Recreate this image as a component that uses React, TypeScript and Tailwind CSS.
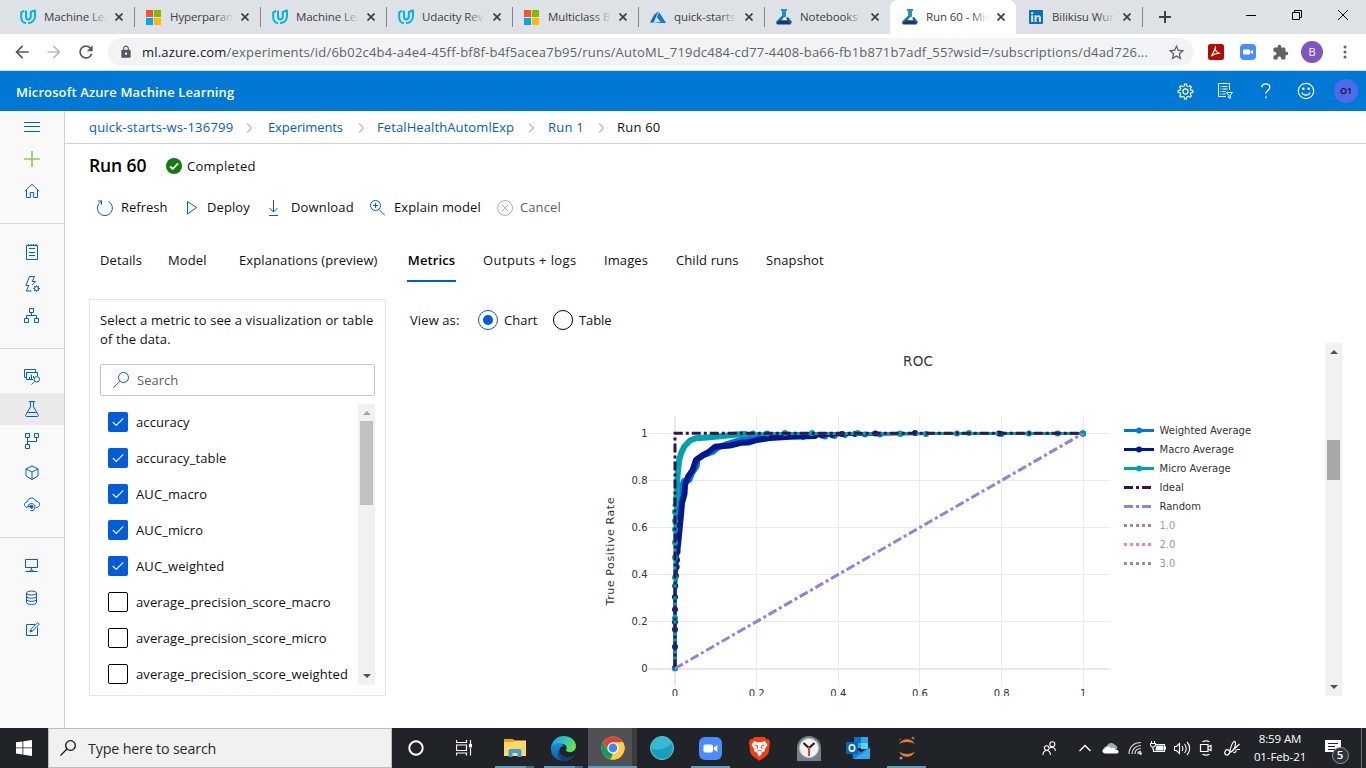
import React from "react";
import { MdExtension, MdStarBorder, MdLock, MdArrowBack, MdArrowForward, MdRefresh } from "react-icons/md";
import { FaLinkedin } from "react-icons/fa";

type IconProps = { children: React.ReactNode; size?: number; color?: string; sw?: number; box?: string };

function Line({ children, size = 16, color = "#015cda", sw = 1, box }: IconProps) {
  return (
    <svg width={size} height={size} viewBox={box ?? `0 0 ${size} ${size}`} fill="none" stroke={color} strokeWidth={sw} className="shrink-0">
      {children}
    </svg>
  );
}

/* ---------- browser chrome ---------- */

const Udacity = () => (
  <svg width="17" height="16" viewBox="0 0 17 16" fill="none" stroke="#02b3e4" strokeWidth="2" strokeLinejoin="round">
    <path d="M4.300 1.800 1.200 3.300V8c0 3.400 2 6 4.800 6.200" />
    <path d="M6 1.800v5.400c0 2 .8 3.200 2.300 3.200s2.500-1.200 2.500-3.100V3l4.200-1.500v5.700c0 3.900-2.800 6.900-7 6.900" />
  </svg>
);
const MsLogo = ({ s = 15 }: { s?: number }) => (
  <svg width={s} height={s} viewBox="0 0 15 15">
    <rect width="7" height="7" fill="#f8512c" />
    <rect x="8" width="7" height="7" fill="#80b900" />
    <rect y="8" width="7" height="7" fill="#01a5f0" />
    <rect x="8" y="8" width="7" height="7" fill="#ffb902" />
  </svg>
);
const Azure = () => (
  <svg width="16" height="16" viewBox="0 0 16 16">
    <path d="M8.500 2 4 6 0 13.500h3.700z" fill="#0f6cbd" />
    <path d="M9 3 6.800 8.500l4 4.300L3.500 14H16z" fill="#0a7ad6" />
  </svg>
);
const MlFlask = () => (
  <svg width="16" height="16" viewBox="0 0 16 16">
    <path d="M5 0h6v2h-1v5l-4 3-5 5.500L0 13l6-6V2H5z" fill="#1b93c9" />
    <path d="M6 7h4l-5 5-4 3.500L0 13z" fill="#0f79b6" />
    <path d="M1 13.500 5 11h8l2.500 2-1 2.500h-13z" fill="#173a6c" />
    <path d="M5.500 11.200 8 8l3.500 3.200z" fill="#fff" />
    <path d="m10 9 2-1 4 5-2 2z" fill="#1a5c9c" />
  </svg>
);

const browserTabs = [
  { icon: <Udacity />, title: "Machine Lea" },
  { icon: <MsLogo />, title: "Hyperparam" },
  { icon: <Udacity />, title: "Machine Lea" },
  { icon: <Udacity />, title: "Udacity Rev" },
  { icon: <MsLogo />, title: "Multiclass B" },
  { icon: <Azure />, title: "quick-starts-" },
  { icon: <MlFlask />, title: "Notebooks -" },
  { icon: <MlFlask />, title: "Run 60 - Mic" },
  { icon: <FaLinkedin size={16} color="#0a72b1" />, title: "Bilikisu Wura" },
];

function TabStrip() {
  return (
    <div className="flex h-[34px] bg-[#dee1e6] pl-2">
      {browserTabs.map((t, i) => {
        const active = i === 7;
        const sep = !active && i !== 6;
        return (
          <div key={i} className={active ? "relative flex h-full w-[126px] items-center rounded-t-lg bg-white" : "relative flex h-full w-[126px] items-center"}>
            <span className="ml-3 flex w-6 shrink-0">{t.icon}</span>
            <span className="relative w-[63px] overflow-hidden whitespace-nowrap text-[11.5px] tracking-[-0.1px] text-[#3c4043]">
              {t.title}
              <i className={(active ? "from-white " : "from-[#dee1e6] ") + "absolute inset-y-0 right-0 w-[18px] bg-gradient-to-l to-transparent"} />
            </span>
            <span className="ml-2 flex">
              <Line size={8} color="#3c4043" sw={1.7}><path d="m.5.5 7 7m0-7-7 7" /></Line>
            </span>
            {sep && <span className="absolute right-[-1px] top-[7px] h-5 w-px bg-[#80868b]" />}
          </div>
        );
      })}
      <div className="flex items-center pl-[17px]">
        <Line size={12} color="#3c4043" sw={2}><path d="M6 0v12M0 6h12" /></Line>
      </div>
      <div className="ml-auto flex h-[29px] items-center">
        <span className="flex w-[46px] justify-center"><Line size={10} color="#000"><path d="M0 5.500h10" /></Line></span>
        <span className="flex w-[46px] justify-center"><Line size={10} color="#000"><path d="M.5 2.500h7v7h-7zM2.500 2.500v-2h7v7h-2" /></Line></span>
        <span className="flex w-[46px] justify-center"><Line size={10} color="#000"><path d="m0 0 10 10M10 0 0 10" /></Line></span>
      </div>
    </div>
  );
}

function AddressBar() {
  return (
    <div className="flex h-[37px] items-center border-b border-[#d5d8dc] bg-white">
      <span className="ml-3 flex w-8"><MdArrowBack size={20} color="#55585d" /></span>
      <span className="flex w-8"><MdArrowForward size={20} color="#bcbec1" /></span>
      <span className="flex w-8"><MdRefresh size={20} color="#55585d" /></span>
      <div className="flex h-7 w-[1086px] items-center rounded-full bg-[#f1f3f4] pl-[11px] pr-2">
        <MdLock size={14} color="#55585d" />
        <span className="ml-[9px] whitespace-nowrap pt-px text-[13px] tracking-[0.203px] text-[#5f6368]">
          <span className="text-[#202124]">ml.azure.com</span>/experiments/id/6b02c4b4-a4e4-45ff-bf8f-b4f5acea7b95/runs/AutoML_719dc484-cd77-4408-ba66-fb1b871b7adf_55?wsid=/subscriptions/d4ad726...
        </span>
        <span className="ml-auto"><MdStarBorder size={19} color="#5f6368" /></span>
      </div>
      <div className="ml-3.5 flex items-center">
        <svg width="16" height="16" viewBox="0 0 16 16"><rect width="16" height="16" rx="2.500" fill="#b30b00" /><path d="M3.500 12c1-2 4-7 3.800-8.500-.8 2 1.500 5.500 5 6-3.300-.3-6.300.3-8.800 2.500z" fill="none" stroke="#fff" strokeWidth="1.200" /></svg>
        <svg className="ml-4" width="16" height="16" viewBox="0 0 16 16"><rect width="16" height="16" rx="4" fill="#4a8cff" /><rect x="3" y="5.500" width="7" height="5" rx="1" fill="#fff" /><path d="M10.500 7.500 13 5.700v4.600l-2.500-1.800z" fill="#fff" /></svg>
        <span className="ml-4"><MdExtension size={17} color="#5f6368" /></span>
        <span className="ml-[12px] flex size-[22px] items-center justify-center rounded-full bg-[#7e57c2] text-[11px] text-white">B</span>
        <svg className="ml-5" width="4" height="14" viewBox="0 0 4 14" fill="#5f6368"><circle cx="2" cy="2" r="1.500" /><circle cx="2" cy="7" r="1.500" /><circle cx="2" cy="12" r="1.500" /></svg>
      </div>
    </div>
  );
}

/* ---------- azure shell ---------- */

const gearPath =
  "M7.100.6h1.800l.4 1.900 1.300.5 1.600-1 1.300 1.300-1 1.600.5 1.300 1.900.4v1.800l-1.900.4-.5 1.300 1 1.600-1.300 1.300-1.600-1-1.300.5-.4 1.900H7.100l-.4-1.900-1.300-.5-1.600 1-1.300-1.300 1-1.600L3 8.800l-1.900-.4V6.600L3 6.200l.5-1.300-1-1.600L3.800 2l1.600 1 1.300-.5z";

function AzureHeader() {
  return (
    <header className="flex h-10 items-center bg-[#0078d4] pl-4 text-white">
      <span className="pt-[3px] text-[13px] font-semibold tracking-[0.11px]">Microsoft Azure Machine Learning</span>
      <div className="ml-auto flex items-center pr-2">
        <span className="flex w-10 justify-center"><Line size={17} box="0 -0.500 16 16" color="#fff" sw={1.1}><path d={gearPath} /><circle cx="8" cy="7.500" r="2.400" /></Line></span>
        <span className="flex w-10 justify-center">
          <Line color="#fff"><path d="M9 13.500H1.500V.5h11V7M3.500 3.500h1M5.500 3.500h5M3.500 6h1M5.500 6h5M3.500 8.500h1M5.500 8.500h3M3.500 11h1M5.500 11h3M9.500 9.500h6l-2.300 2.800v3.200l-1.500-1v-2.200z" /></Line>
        </span>
        <span className="flex w-[41px] justify-center"><Line color="#fff" sw={1.3}><path d="M3.800 4.300C3.800 2 5.500.8 7.800.8c2.400 0 4 1.300 4 3.400 0 3.300-3.900 3.300-3.900 6.600M7.900 13.300v1.900" /></Line></span>
        <span className="flex w-10 justify-center">
          <Line size={18} color="#fff" sw={1.200}><circle cx="9" cy="9" r="7.700" /><path d="M4.800 10.500c1.600 3.600 6.800 3.600 8.400 0" /><circle cx="6.300" cy="6.700" r=".7" fill="#fff" /><circle cx="11.700" cy="6.700" r=".7" fill="#fff" /></Line>
        </span>
        <span className="ml-[8px] flex size-6 items-center justify-center rounded-full bg-[#4f6bed] text-[9px] font-semibold text-[#111]">O1</span>
      </div>
    </header>
  );
}

const navGroups: React.ReactNode[][] = [
  [
    <Line><path d="M0 3.500h16M0 7.500h16M0 12.500h16" /></Line>,
    <Line color="#86cf4c" sw={1.600}><path d="M0 8h16M8 0v16" /></Line>,
    <Line><path d="m.8 8.300 7.200-7 7.200 7M2.500 7v7.500h3.800v-5h3.400v5h3.800V7" /></Line>,
  ],
  [
    <Line><path d="M2.500 1.500h11v14h-11zM5 4.500h6M5 8.500h6M5 11.500h6" /><path d="M4.500 0v2M7 0v2M9.500 0v2M12 0v2" /></Line>,
    <Line><path d="m7.500 15-5.200 0 2.500-5.500H2L5.500.5h5L8.200 5.500h3.500L8 9" /><circle cx="12.500" cy="12.500" r="2" /><path d="M12.500 9.300v1.200M12.500 14.500v1.300M9.200 12.500h1.300M14.500 12.500H16M10.200 10.200l.9.900M14 14l.9.900M14.800 10.200l-.9.900M11 14l-.9.900" /></Line>,
    <Line><path d="M5.500.5h4v4h-4zM.5 10.500h4v4h-4zM10.500 10.500h4v4h-4zM7.500 4.500v3M2.500 10.500v-3h10v3" /></Line>,
  ],
  [
    <Line><path d="M9 10.500H2.500v-7h11V7M2.500 8.500h-2v-8h11v3M5.500 10V8M7.500 10V5.500M9.500 9V7" /><circle cx="12.800" cy="10.300" r="2.700" /><path d="M10.900 12.300 7.500 15.700" /></Line>,
    <Line><path d="M5 .5h6M6.500.5v5.200L1.800 14c-.4.900 0 1.500.8 1.500h10.800c.8 0 1.200-.6.800-1.500L9.500 5.700V.5M3.300 11.500h9.400" /></Line>,
    <Line><path d="M1.500.5h4v4h-4zM10.500.5h4v4h-4zM1.500 11.500h4v4h-4zM3.500 4.500v7M3.500 8.500h9v-4" /></Line>,
    <Line><path d="M8 1 14 4v7l-6 3.500L2 11V4zM2 4l6 3 6-3M8 7v7.500" /></Line>,
    <Line><path d="M3.500 10.500C1.500 10.500.5 9 .5 7.700c0-1.500 1.100-2.700 2.700-2.700C3.500 2.500 5.300 1 7.500 1c2 0 3.500 1.200 4 3 2.300 0 4 1.200 4 3.200 0 1.900-1.300 3.300-3.500 3.300" /><path d="M4 9.500a3.500 3.500 0 1 1 2.500 4" /><circle cx="7.500" cy="9.800" r="1.500" fill="#015cda" /><path d="M3.500 9.500h4" /></Line>,
  ],
  [
    <Line><path d="M1.500 1.500h12v8h-12zM7.500 9.500v3M1.500 13.500h12M5 13.500l2.500-2 2.500 2" /></Line>,
    <Line><ellipse cx="7.500" cy="3" rx="5" ry="2" /><path d="M2.500 3v9.500c0 2.700 10 2.700 10 0V3M2.500 6.200c0 2.700 10 2.700 10 0M2.500 9.300c0 2.700 10 2.700 10 0" /></Line>,
    <Line><path d="M11 2.500H2.500v11h11V5.500M6 10l.7-2.500 7-6.800 1.500 1.500-6.800 7zM6.700 7.700l1.600 1.500" /></Line>,
  ],
];

function SideNav() {
  return (
    <nav className="flex w-[65px] shrink-0 flex-col border-r border-[#d2d0ce] bg-[#f9f9f9]">
      {navGroups.map((g, gi) => (
        <div key={gi} className={gi === 0 ? "pb-4" : "border-t border-[#d8d6d4] pb-4 pt-3"}>
          {g.map((ic, i) => (
            <div key={i} className={gi === 2 && i === 1 ? "flex h-8 items-center justify-center bg-[#eaeaea]" : "flex h-8 items-center justify-center"}>
              {ic}
            </div>
          ))}
        </div>
      ))}
    </nav>
  );
}

const Chevron = () => (
  <Line size={10} color="#8a8886"><path d="m2 .5 4.500 4.500L2 9.500" /></Line>
);

function Breadcrumb() {
  return (
    <div className="flex h-[33px] items-center whitespace-nowrap border-b border-[#d2d0ce] pl-6 pt-px text-[13px] tracking-[0.06px] text-[#015cda]">
      <span className="w-[158px] tracking-[0.2px]">quick-starts-ws-136799</span>
      <span className="-ml-[2px] flex w-[23px]"><Chevron /></span>
      <span className="w-[89px] tracking-[-0.1px]">Experiments</span>
      <span className="flex w-5"><Chevron /></span>
      <span className="w-[150px] tracking-[0.1px]">FetalHealthAutomlExp</span>
      <span className="flex w-[21px]"><Chevron /></span>
      <span className="w-[49px] tracking-[0.2px]">Run 1</span>
      <span className="flex w-5"><Chevron /></span>
      <span className="tracking-[0.2px] text-[#111]">Run 60</span>
    </div>
  );
}

function Toolbar() {
  return (
    <div className="mt-[18px] flex h-6 items-center whitespace-nowrap text-[13px] tracking-[0.05px] text-[#111]">
      <span className="ml-2 flex w-6"><Line><path d="M4 1.500A7.500 7.500 0 1 0 11.500 1.300M4.500.5v4M.8.8h4" transform="translate(0 .2)" /></Line></span>
      <span className="w-[66px] tracking-[0]">Refresh</span>
      <span className="flex w-5"><Line><path d="m.5 1.500 9 6-9 6.500z" /></Line></span>
      <span className="w-[58px] tracking-[0.1px]">Deploy</span>
      <span className="flex w-[26px]"><Line><path d="M8.500 0v12M4.500 8l4 4 4-4M4 15.500h9" /></Line></span>
      <span className="w-[78px] tracking-[0.15px]">Download</span>
      <span className="flex w-[25px]"><Line><circle cx="6.500" cy="5.500" r="5" /><path d="m10 9.500 6 6M4 5.500h5M6.500 3v5" /></Line></span>
      <span className="w-[103px] tracking-[0.1px]">Explain model</span>
      <span className="flex w-[23px]"><Line color="#b3b1af"><circle cx="8" cy="8" r="7.500" /><path d="m5 5 6 6m0-6-6 6" /></Line></span>
      <span className="tracking-[0.1px] text-[#605e5c]">Cancel</span>
    </div>
  );
}

function PageTabs() {
  return (
    <div className="mt-[18px] flex h-[44px] items-center whitespace-nowrap pl-[11px] text-[13px] tracking-[0.1px] text-[#111]">
      <span className="w-[68px] pt-0.5">Details</span>
      <span className="w-[71px] pt-0.5">Model</span>
      <span className="w-[168px] pt-0.5">Explanations (preview)</span>
      <span className="mr-[27px] flex h-full w-[49px] items-center justify-center border-b-2 border-[#015cda] pt-1 font-semibold text-black">Metrics</span>
      <span className="w-[121px] pt-0.5 tracking-[0.4px]">Outputs + logs</span>
      <span className="w-[72px] pt-0.5">Images</span>
      <span className="w-[90px] pt-0.5">Child runs</span>
      <span className="pt-0.5">Snapshot</span>
    </div>
  );
}

const metrics = [
  ["accuracy", true],
  ["accuracy_table", true],
  ["AUC_macro", true],
  ["AUC_micro", true],
  ["AUC_weighted", true],
  ["average_precision_score_macro", false],
  ["average_precision_score_micro", false],
  ["average_precision_score_weighted", false],
] as const;

const Up = ({ c }: { c: string }) => <svg width="8" height="4" viewBox="0 0 8 4" fill={c}><path d="M0 4 4 0l4 4z" /></svg>;
const Down = ({ c }: { c: string }) => <svg width="8" height="4" viewBox="0 0 8 4" fill={c}><path d="M0 0h8L4 4z" /></svg>;

function MetricPanel() {
  return (
    <section className="h-[397px] w-[297px] shrink-0 border border-[#e6e5e4] px-2.5 pt-[11px] text-[13px] text-[#111]">
      <p className="whitespace-nowrap leading-[19px] tracking-[0.12px]">Select a metric to see a visualization or table<br />of the data.</p>
      <div className="mt-[15px] flex h-8 items-center rounded-xs border border-[#c8c6c4] pl-3 text-[#605e5c]">
        <Line><circle cx="10.500" cy="5.500" r="5" /><path d="M7 9.200.5 15.700" /></Line>
        <span className="ml-2 pt-px">Search</span>
      </div>
      <div className="mt-2 flex h-[281px]">
        <ul className="w-[258px] pl-2 pt-2">
          {metrics.map(([name, on]) => (
            <li key={name} className="mb-4 flex h-5 items-center">
              {on ? (
                <span className="flex size-5 shrink-0 items-center justify-center rounded-xs bg-[#015cda]">
                  <Line size={12} color="#fff" sw={1.100}><path d="m.8 6 3.500 3.500L11.300 2.300" /></Line>
                </span>
              ) : (
                <span className="size-5 shrink-0 rounded-xs border border-black bg-white" />
              )}
              <span className="ml-2 whitespace-nowrap pt-px tracking-[0.1px]">{name}</span>
            </li>
          ))}
        </ul>
        <div className="flex w-[17px] shrink-0 flex-col items-center bg-[#f1f1f1] pb-[7px] pt-[7px]">
          <Up c="#a3a3a3" />
          <div className="mt-[6px] h-[84px] w-[13px] bg-[#c1c1c1]" />
          <div className="mt-auto"><Down c="#505050" /></div>
        </div>
      </div>
    </section>
  );
}

/* ---------- ROC chart ---------- */

const ticks = [0, 0.2, 0.4, 0.6, 0.8, 1];
const px = (v: number) => 675 + v * 408.3;
const py = (v: number) => 668.5 - v * 235;

const weightedCurve = "M677.500 548 679 520 679.500 500 681 490 684 481 689.300 480 692 473 696.700 466 697.500 459 704 455 713 451.600 718.300 447.300 727 444 736.700 441 750 438 763 436.700 790 436";
const macroCurve = "M677.500 552V538M678 545 679.500 530 681 515 682 503 684.500 494 685 485 688 476.700 692.700 470 696 460 703 455 708 452.500 715 446.700 730 445.500 741 442.800 748 442.600 756.700 440 770 438 790 436.700 815 436";
const microCurve = "M676 500 676.700 494 677.600 475 679 461 681 453.500 684.300 446.500 690 440.500 696 438.300 707 437.500 723 436 737 434.600 745 434";

const dots = (pts: number[][], fill: string) => pts.map(([x, y], i) => <circle key={i} cx={x} cy={y} r="3" fill={fill} />);

const weightedDots = [[675, 668], [803, 437], [825, 436.500], [834.500, 436], [845, 435], [865, 434.500], [880, 434.500], [900.500, 434], [926, 434], [957, 433.500], [1001.500, 434], [1029, 433.500], [1057.500, 433.500], [1083, 433.500]];
const macroDots = [[675, 668], [675, 646.700], [675, 629.500], [675, 622], [675, 609.500], [675, 597], [675.200, 586], [676, 576], [676.700, 567], [677, 560], [822, 435.500], [832, 435], [842, 434], [855, 434], [875.500, 433.500], [915, 433], [999, 433.500], [1083, 433.500]];
const microDots = [[675, 668.500], [675, 618], [675, 577.500], [675, 557.500], [675, 542.500], [675, 529.500], [675, 521], [675, 512], [675.500, 505], [753, 433.500], [767, 433.500], [785, 433], [812, 433], [857.500, 433], [900, 433.500], [969, 433], [1083, 433.500]];

const legend = [
  { name: "Weighted Average", color: "#0078d4", dash: "", dot: true, faded: false },
  { name: "Macro Average", color: "#00188f", dash: "", dot: true, faded: false },
  { name: "Micro Average", color: "#00a2ad", dash: "", dot: true, faded: false },
  { name: "Ideal", color: "#32174d", dash: "9 3 3 3", dot: false, faded: false },
  { name: "Random", color: "#9180de", dash: "9 3 3 3", dot: false, faded: false },
  { name: "1.0", color: "#a883a6", dash: "3 3", dot: false, faded: true },
  { name: "2.0", color: "#f27fc8", dash: "3 3", dot: false, faded: true },
  { name: "3.0", color: "#7f9a94", dash: "3 3", dot: false, faded: true },
];

function RocChart() {
  return (
    <svg width="915" height="353" viewBox="410 343 915 353" fontFamily="'DejaVu Sans', Verdana, sans-serif" fill="#2a3f5f">
      <text x="903" y="366" fontSize="13.500" fill="#333" letterSpacing="0.3">ROC</text>
      <g stroke="#ebebeb" strokeWidth="1">
        {ticks.slice(1).map((t) => <path key={t} d={`M${Math.floor(px(t)) + 0.5} 416V686M648 ${Math.floor(py(t)) + 0.5}H1110`} />)}
      </g>
      <path d="M675 416V686M648 669H1110" stroke="#e9e9e9" strokeWidth="2" />
      <g fontSize="10" fill="#333">
        {ticks.map((t) => <text key={t} x="647.500" y={py(t) + 3.5} textAnchor="end">{t}</text>)}
        {ticks.map((t) => <text key={t} x={px(t)} y="697" textAnchor="middle">{t}</text>)}
      </g>
      <text transform="translate(614 605.500) rotate(-90)" fontSize="11" fill="#333" textLength="108">True Positive Rate</text>
      <g fill="none" strokeLinejoin="round" strokeLinecap="round">
        <path d="M675 668V600L678 548M790 436 850 434.500 930 433.500H1083" stroke="#0078d4" strokeWidth="3" />
        <path d={weightedCurve} stroke="#0078d4" strokeWidth="6" />
        {dots(weightedDots, "#0078d4")}
        <path d="M675 668V590L677.500 550M815 436 850 434 930 433.500H1083" stroke="#00188f" strokeWidth="3" />
        <path d={macroCurve} stroke="#00188f" strokeWidth="6" />
        {dots(macroDots, "#00188f")}
        <path d="M675 668V515L676 500M740 434 780 433.500H1083" stroke="#00a2ad" strokeWidth="3" />
        <path d={microCurve} stroke="#00a2ad" strokeWidth="6" />
        {dots(microDots, "#00a2ad")}
      </g>
      <path d="M675 668.500V433.300H1083" fill="none" stroke="#32174d" strokeWidth="3" strokeDasharray="9 3 3 3" />
      <path d="M675 668.500 1083 433.500" fill="none" stroke="#9180de" strokeWidth="3" strokeDasharray="9 3 3 3" />
      {legend.map((l, i) => {
        const y = 430.5 + i * 19;
        return (
          <g key={l.name}>
            <path d={`M1124 ${y}h30`} stroke={l.color} strokeWidth="3" strokeDasharray={l.dash} />
            {l.dot && <circle cx="1139" cy={y} r="3" fill={l.color} />}
            <text x="1159.500" y={y + 3.7} fontSize="10" fill={l.faded ? "#999" : "#333"}>{l.name}</text>
          </g>
        );
      })}
    </svg>
  );
}

function ChartArea() {
  return (
    <section className="ml-6 text-[13px] text-[#111]">
      <div className="flex h-11 items-center pb-0.5">
        <span className="w-[68px] pt-px tracking-[0.1px]">View as:</span>
        <span className="flex size-5 items-center justify-center rounded-full border border-[#015cda]"><i className="size-2.5 rounded-full bg-[#015cda]" /></span>
        <span className="ml-1.5 w-[49px] pt-px">Chart</span>
        <span className="size-5 rounded-full border border-black" />
        <span className="ml-1.5 pt-px tracking-[-0.1px]">Table</span>
      </div>
      <div className="flex h-[353px]">
        <RocChart />
        <div className="flex w-[17px] flex-col items-center bg-[#f1f1f1] py-[7px]">
          <Up c="#505050" />
          <div className="mt-[86px] h-10 w-[13px] bg-[#a8a8a8]" />
          <div className="mt-auto"><Down c="#505050" /></div>
        </div>
      </div>
    </section>
  );
}

/* ---------- taskbar ---------- */

const Folder = () => (
  <svg width="22" height="20" viewBox="0 0 22 20"><path d="M0 1h9l2 2h11v15H0z" fill="#e8a60c" /><path d="M0 4h9l1.500-1.500H22V18H0z" fill="#ffd868" /><path d="M4.500 19v-6a2 2 0 0 1 2-2h9a2 2 0 0 1 2 2v6h-4v-4h-5v4z" fill="#3d9bdc" /></svg>
);
const Edge = () => (
  <svg width="25" height="25" viewBox="0 0 24 24">
    <defs>
      <linearGradient id="edgeTop" x1="0" x2="1" y2=".4"><stop stopColor="#1b9de2" /><stop offset=".6" stopColor="#31c8c0" /><stop offset="1" stopColor="#67e04f" /></linearGradient>
      <linearGradient id="edgeLow" x2="0" y2="1"><stop stopColor="#1a92dc" /><stop offset="1" stopColor="#0d57a6" /></linearGradient>
    </defs>
    <path d="M0 11C1 4.500 6 0 12 0c7 0 12 4.500 12 9.500 0 4-3 6-6 6-2.800 0-4.300-1-3.500-2.200 1.300-2 .3-5.800-4.500-5.800C5 7.500 1 9 0 13z" fill="url(#edgeTop)" />
    <path d="M0 12c.5-3.500 4-5.500 8-5 2 .2 4 1.500 4.500 3-2-.8-4.500 1-4.500 4 0 4.500 5 8 10.500 6.500 1.800-.5 3-1.600 3.800-1.800C20 22 16.500 24 12 24 5.500 24-.5 19 0 12z" fill="url(#edgeLow)" />
    <path d="M8 13c-1 5.500 5 9.500 10.500 7.500 1.800-.5 3-1.600 3.800-1.800-2.300 3.800-6.500 5.300-10.300 5.300-4.500-1.500-7-6.500-4-11z" fill="#123f7c" />
  </svg>
);
const Chrome = () => (
  <svg width="24" height="24" viewBox="0 0 24 24">
    <circle cx="12" cy="12" r="11.500" fill="#ffce44" />
    <path d="M2 6.300A11.500 11.500 0 0 1 22 6.300H12L7 15z" fill="#dc4437" />
    <path d="M2 6.300 7 14.900 12 17.700 9.500 23.200A11.500 11.500 0 0 1 2 6.300z" fill="#159b5b" />
    <path d="M9.500 23.200 14.500 16 17.500 12 17 6.300H22A11.500 11.500 0 0 1 11 23.500z" fill="#ffce44" />
    <circle cx="12" cy="12" r="5.700" fill="#fff" /><circle cx="12" cy="12" r="4.400" fill="#4285f4" />
  </svg>
);
const TealBall = () => (
  <svg width="24" height="24" viewBox="0 0 24 24"><circle cx="12" cy="12" r="11.500" fill="#169fbf" stroke="#79c4d4" /><path d="M1 12C6 15 15 14 22.500 7A11.300 11.300 0 0 0 1 12z" fill="#37b8d3" /></svg>
);
const Zoom = () => (
  <svg width="23" height="23" viewBox="0 0 23 23"><rect width="23" height="23" rx="6" fill="#4a8cff" /><rect x="4.500" y="7.500" width="9.500" height="8" rx="1.800" fill="#fff" /><path d="m14.800 10.500 3.500-2.500v7l-3.500-2.500z" fill="#fff" /></svg>
);
const Brave = () => (
  <svg width="21" height="25" viewBox="0 0 21 25"><path d="M5.500 1h10l2 2.300 2-.3 1.500 3-1 9c-.7 4-3 5.700-9.500 9.700C4 20.700 1.700 19 1 15L0 6l1.500-3 2 .3z" fill="#fb3b16" /><path d="M5 5 8 6h5l3-1 2.500 4-3 4.500.6 1.600-3.100 1.400-1 2.500-1.500 1.500L9 19l-1-2.500-3.100-1.400.6-1.600L2.500 9z" fill="#fff" /><path d="m5.500 9 3.200 1-.7 3M15.500 9l-3.200 1 .7 3M8.500 15.300l2-1 2 1" fill="none" stroke="#fb3b16" strokeWidth="1" /></svg>
);
const Clock = () => (
  <svg width="24" height="25" viewBox="0 0 24 25"><path d="M0 12A12 12 0 0 1 24 12v13H0z" fill="#76808a" /><circle cx="12" cy="12" r="9.500" fill="#f3f3f3" stroke="#c7c9cc" /><path d="M12 12 6.500 7M12 12l5.500-5" stroke="#222" strokeWidth="2.200" /><path d="M12 11v9" stroke="#e2451c" strokeWidth="2" /></svg>
);
const Outlook = () => (
  <svg width="24" height="23" viewBox="0 0 24 23"><path d="M8 0h14v11H8z" fill="#28a8ea" /><path d="M8 0h7v6H8z" fill="#0f6ebe" /><path d="M15 6h7v6h-7z" fill="#50d9ff" /><path d="m6 10 9 5 9-5v11a1 1 0 0 1-1 1H7z" fill="#1684d8" /><path d="m8 22 16-11v10a1 1 0 0 1-1 1z" fill="#35aaf0" /><rect y="5" width="12" height="12" rx="1" fill="#0a64b8" /><ellipse cx="6" cy="11" rx="2.700" ry="3.200" fill="none" stroke="#fff" strokeWidth="1.600" /></svg>
);
const Jupyter = () => (
  <svg width="18" height="24" viewBox="0 0 18 24"><path d="M1 8.500C4 1.500 14 1.500 17 8.500 13 5.300 5 5.300 1 8.500zM1 15.500c4 3.200 12 3.200 16 0-3 7-13 7-16 0z" fill="#f37726" /><circle cx="15" cy="2" r="1.500" fill="#767677" /><circle cx="3" cy="22" r="1.600" fill="#989798" /><circle cx="2" cy="3.500" r=".9" fill="#616262" /></svg>
);

const apps = [
  { el: <Folder />, run: true },
  { el: <Edge />, run: true },
  { el: <Chrome />, run: true },
  { el: <TealBall />, run: false },
  { el: <Zoom />, run: true },
  { el: <Brave />, run: false },
  { el: <Clock />, run: false },
  { el: <Outlook />, run: false },
  { el: <Jupyter />, run: true },
];

function underline(i: number) {
  if (i === 2) return "absolute inset-x-0 bottom-0 h-0.5 bg-[#5b9dbd]";
  if (i < 2) return "absolute inset-x-[5px] bottom-0 h-0.5 bg-gradient-to-r from-[#5b9dbd] from-80% to-[#3f6b80] to-80%";
  return "absolute inset-x-[5px] bottom-0 h-0.5 bg-[#5b9dbd]";
}

function Taskbar() {
  return (
    <footer className="flex h-10 bg-[#202327] text-white">
      <div className="flex w-12 items-center justify-center">
        <svg width="16" height="16" viewBox="0 0 16 16" fill="#fff"><path d="M0 2.300 6.500 1.400v6.100H0zM7.300 1.300 16 0v7.500H7.300zM0 8.300h6.500v6.200L0 13.600zM7.300 8.300H16V16l-8.700-1.300z" /></svg>
      </div>
      <div className="flex w-[344px] items-center border border-[#bdbdbd] bg-[#f1f1f1] pl-[11px] text-[#2b2b2b]">
        <Line color="#111" sw={1.300}><circle cx="10.500" cy="5.500" r="4.800" /><path d="M7 9 .5 15.500" /></Line>
        <span className="ml-[12px] pt-px text-[14.300px] tracking-[-0.18px]">Type here to search</span>
      </div>
      <div className="flex w-12 items-center justify-center"><Line size={18} color="#fff" sw={2}><circle cx="9" cy="9" r="6.700" /></Line></div>
      <div className="flex w-12 items-center justify-center"><Line color="#fff" sw={1.200}><path d="M.5 0v2.500h10V0M.5 15.500V13h10v2.500M.5 5h10v5.500H.5zM14.500 0v4M14.500 8v7.500" /><path d="M13.500 4.500h2v2.500h-2z" fill="#fff" /></Line></div>
      <div className="flex pl-[2px]">
        {apps.map((a, i) => (
          <div key={i} className={i === 2 ? "relative flex w-[49px] items-center justify-center bg-gradient-to-r from-[#505154] from-90% to-[#3a3c40] to-90%" : "relative flex w-[49px] items-center justify-center"}>
            {a.el}
            {a.run && <span className={underline(i)} />}
          </div>
        ))}
      </div>
      <div className="ml-auto flex items-center">
        <span className="mr-px flex w-[35px]"><Line size={15} box="0 0 16 16" color="#fff" sw={1.200}><circle cx="11" cy="3.500" r="2.700" /><circle cx="5" cy="7.500" r="2.500" /><path d="M8 7.500c3-1.700 6-.5 6.300 3M1 15c.3-6.500 7.700-6.500 8 0" /></Line></span>
        <span className="flex w-[24px]"><Line size={14} color="#fff" sw={1.300}><path d="m1.500 10 5.500-5.500 5.500 5.500" /></Line></span>
        <span className="flex w-[26px]"><svg width="17" height="12" viewBox="0 0 17 12"><path d="M2 9C0 5 5 4 5 4c1-3 5-4.500 8-1 3 1 2 4 2 4z" fill="#aaa" /><path d="M3.500 11.500c-4 0-4-4.500-.5-4.800C4.500 4 8 4.500 9 6.500c2-1.500 4-.5 4.500 1 4 0 4 4 .8 4z" fill="#fff" /></svg></span>
        <span className="flex w-[22px]"><Line size={14} color="#ddd" sw={1.200}><path d="M1 13C1 6 6 1.500 13 1.500M4 13c0-5 4-8.500 9-8.500M7 13c0-3.500 2.500-5.500 6-5.500M10 13c0-1.700 1.300-2.700 3-2.700" /><circle cx="12.500" cy="12.500" r=".8" fill="#fff" /></Line></span>
        <span className="flex w-6"><Line color="#fff" sw={1.100}><path d="M5.500 4.500h9v7h-11V9M15.500 6.500v3M1.500 1v2M4.500 1v2M.5 3.500h5v2L4 7H2L.5 5.500zM3 7v3" /><path d="M7 6h6v4H6z" fill="#fff" /></Line></span>
        <span className="flex w-[24px]"><Line size={17} color="#fff" sw={1.100}><path d="M.5 6.500h2l3-3v10l-3-3h-2zM8 6c1 1.500 1 3.500 0 5M10.500 4c2.300 2.500 2.300 6.500 0 9M13 2c3.500 3.500 3.500 9.500 0 13" /></Line></span>
        <span className="flex w-[26px]"><Line color="#fff" sw={1.200} box="0 0 14 16"><path d="M1.500 4.500h7.500v7H1.500zM9 7l3-1.500v5L9 9M3.500 1.700c2-1 5-1 7 0M3.500 14.300c2 1 5 1 7 0" /></Line></span>
        <span className="flex w-[29px]"><Line size={17} color="#fff" sw={1.200}><path d="M6 12c4 0 6.500-8.500 5-10.500C9 .5 6 8 6 12zm0 0c-2 5-6.500 3-5-.5C2 9 5 9 6 12zM7 12l8.500-8M9.500 12c1 2 3-1 2.500-2.500M13 9.500h3" /></Line></span>
        <div className="w-[54px] text-center text-[11.500px] leading-[18px] tracking-[-0.1px]"><span className="whitespace-nowrap">8:59 AM</span><br /><span className="whitespace-nowrap">01-Feb-21</span></div>
        <div className="relative ml-[18px] w-9 pt-[7px]">
          <svg width="26" height="26" viewBox="0 0 26 26"><path d="M0 1h16v12h-5l-3 3v-3H0z" fill="#fff" /><path d="M3 4.500h10M3 7.500h7M3 10.500h10" stroke="#202327" /><circle cx="15.500" cy="16.500" r="8" fill="#303338" stroke="#989898" /></svg>
          <span className="absolute left-[7px] top-[14px] w-4 text-center text-[11.500px] font-semibold leading-[18px]">5</span>
        </div>
        <div className="mr-1 h-10 w-px bg-[#6a6c70]" />
      </div>
    </footer>
  );
}

export default function App() {
  return (
    <div className="flex h-[768px] w-[1366px] flex-col overflow-hidden bg-white font-['Open_Sans','Noto_Sans',sans-serif]">
      <TabStrip />
      <AddressBar />
      <AzureHeader />
      <div className="flex h-[617px]">
        <SideNav />
        <main className="flex-1">
          <Breadcrumb />
          <div className="pl-6">
            <div className="mt-2.5 flex h-6 items-center text-[13px] text-[#111]">
              <h1 className="w-[77px] whitespace-nowrap pb-px text-[17.500px] font-semibold tracking-[-0.1px] text-black">Run 60</h1>
              <svg width="16" height="16" viewBox="0 0 16 16"><circle cx="8" cy="8" r="8" fill="#107c10" /><path d="m4 8.300 2.700 2.700L12.200 5.400" fill="none" stroke="#fff" strokeWidth="1.800" /></svg>
              <span className="ml-[5px] pt-px tracking-[0.25px]">Completed</span>
            </div>
            <Toolbar />
            <PageTabs />
            <div className="mt-[17px] flex">
              <MetricPanel />
              <ChartArea />
            </div>
          </div>
        </main>
      </div>
      <Taskbar />
    </div>
  );
}
